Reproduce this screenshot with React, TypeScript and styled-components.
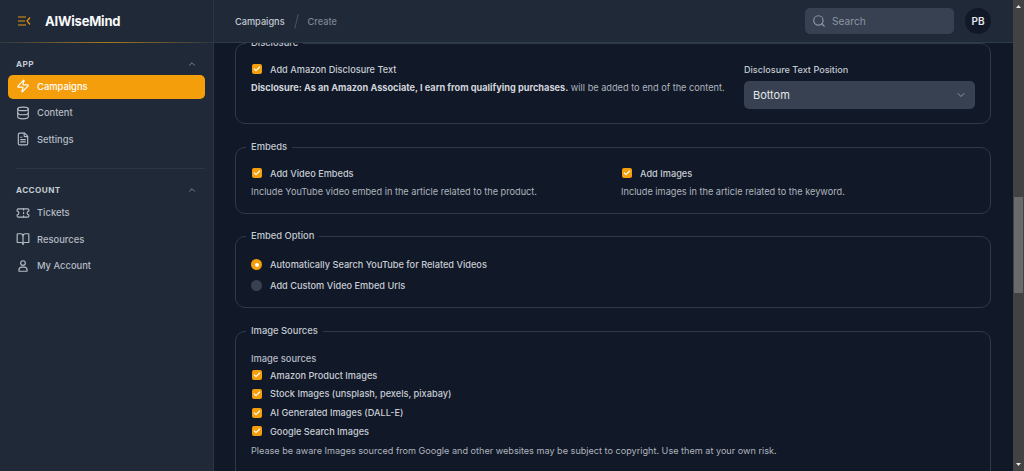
import React from "react";
import styled, { createGlobalStyle } from "styled-components";
import { Zap, Database, FileText, Ticket, BookOpen, ChevronUp, ChevronDown, Search, Check } from "lucide-react";

const Global = createGlobalStyle`
  html, body { margin: 0; padding: 0; height: 471px; overflow: hidden; background: #111827; }
  body { font-family: "Inter", "Liberation Sans", sans-serif; }
  * { box-sizing: border-box; }
`;

const Shell = styled.div`
  display: flex;
  width: 1024px;
  height: 471px;
  overflow: hidden;
`;

const Sidebar = styled.aside`
  width: 214px;
  flex: none;
  background: #1f2937;
  border-right: 1px solid #2b3543;
  display: flex;
  flex-direction: column;
`;

const Brand = styled.div`
  height: 43px;
  display: flex;
  align-items: center;
  gap: 14px;
  padding: 0 0 1px 18px;
  border-bottom: 1px solid transparent;
  border-image: linear-gradient(90deg, #2b3543 0%, #a8791c 50%, #2b3543 100%) 1;
`;

const BrandName = styled.span`
  color: #f9fafb;
  font-size: 13px;
  font-weight: 700;
  letter-spacing: -0.2px;
`;

const NavSection = styled.section<{ $top: number }>`
  padding: ${(p) => p.$top}px 8px 0;
`;

const SectionHead = styled.div`
  display: flex;
  align-items: center;
  justify-content: space-between;
  height: 14px;
  padding: 0 8px;
  margin-bottom: 4.5px;
  color: #c3c9d2;
  font-size: 8.2px;
  font-weight: 700;
  letter-spacing: 0.4px;
`;

const NavItem = styled.div<{ $active?: boolean }>`
  height: 24px;
  display: flex;
  align-items: center;
  gap: 7px;
  padding: 0 8px 2px;
  border-radius: 5px;
  font-size: 9.4px;
  font-weight: 500;
  color: ${(p) => (p.$active ? "#fff" : "#b6bcc6")};
  background: ${(p) => (p.$active ? "#f59e0b" : "transparent")};
`;

const NavList = styled.div`
  display: flex;
  flex-direction: column;
  gap: 2.5px;
`;

const SideDivider = styled.div`
  height: 1px;
  margin: 16px 8px 0 16px;
  background: #2b3543;
`;

const Main = styled.div`
  flex: 1;
  display: flex;
  flex-direction: column;
  min-width: 0;
`;

const TopBar = styled.header`
  height: 43px;
  flex: none;
  background: #1f2937;
  border-bottom: 1px solid #2f3a49;
  display: flex;
  align-items: center;
  padding: 0 22px 0 21px;
`;

const Crumb = styled.span<{ $muted?: boolean }>`
  font-size: 9.2px;
  font-weight: 500;
  color: ${(p) => (p.$muted ? "#7d8695" : "#c2c8d1")};
`;

const CrumbSlash = styled.span`
  width: 1px;
  height: 15px;
  margin: 0 11px;
  background: #4b5563;
  transform: rotate(14deg);
`;

const SearchBox = styled.div`
  width: 149px;
  height: 26px;
  margin-left: auto;
  border-radius: 5px;
  background: #374151;
  display: flex;
  align-items: center;
  gap: 6px;
  padding: 0 7px;
  color: #8d95a3;
  font-size: 10.2px;
`;

const Avatar = styled.div`
  width: 26px;
  height: 26px;
  margin-left: 11px;
  border-radius: 50%;
  background: #111827;
  color: #e5e7eb;
  font-size: 10px;
  font-weight: 600;
  display: flex;
  align-items: center;
  justify-content: center;
`;

const Body = styled.div`
  flex: 1;
  min-height: 0;
  overflow: hidden;
  background: #111827;
`;

const Content = styled.main`
  width: 798px;
  margin: -7px 0 0 0;
  padding: 0 21px;
  display: flex;
  flex-direction: column;
`;

const Group = styled.fieldset<{ $h: number; $gap: number }>`
  margin: 0 0 ${(p) => p.$gap}px;
  padding: 0 15px;
  min-width: 0;
  height: ${(p) => p.$h}px;
  border: 1px solid #2f3a49;
  border-radius: 10px;
`;

const Legend = styled.legend`
  padding: 0 5px;
  margin-left: -5px;
  font-size: 9.4px;
  line-height: 14px;
  font-weight: 500;
  color: #c2c8d1;
`;

const Columns = styled.div`
  display: flex;
  gap: 17px;
  padding-top: 12.5px;
`;

const Col = styled.div<{ $w?: number }>`
  flex: ${(p) => (p.$w ? "none" : "1")};
  width: ${(p) => (p.$w ? `${p.$w}px` : "auto")};
  min-width: 0;
`;

const Line = styled.label<{ $mb?: number }>`
  display: flex;
  align-items: center;
  gap: 8px;
  height: 13px;
  margin-bottom: ${(p) => p.$mb ?? 0}px;
  font-size: 9.2px;
  font-weight: 500;
  color: #c8cdd5;
  white-space: nowrap;
`;

const CheckBox = styled.span`
  width: 10px;
  height: 10px;
  margin-left: 1px;
  flex: none;
  border-radius: 2px;
  background: #f59e0b;
  color: #fff;
  display: flex;
  align-items: center;
  justify-content: center;
`;

const Radio = styled.span<{ $on?: boolean }>`
  width: 11px;
  height: 11px;
  flex: none;
  border-radius: 50%;
  background: ${(p) => (p.$on ? "#f59e0b" : "#374151")};
  display: flex;
  align-items: center;
  justify-content: center;
  &::after {
    content: "";
    display: ${(p) => (p.$on ? "block" : "none")};
    width: 4px;
    height: 4px;
    border-radius: 50%;
    background: #fff;
  }
`;

const Help = styled.p<{ $mt?: number; $size?: number }>`
  margin: ${(p) => p.$mt ?? 0}px 0 0;
  font-size: ${(p) => p.$size ?? 9.2}px;
  line-height: 13px;
  color: #aeb4be;
  white-space: nowrap;
`;

const Strong = styled.b`
  font-weight: 700;
  color: #d1d5db;
`;

const FieldLabel = styled.div`
  font-size: 9.1px;
  line-height: 13px;
  font-weight: 500;
  color: #c2c8d1;
  margin-bottom: 5px;
`;

const SelectBox = styled.div`
  height: 28px;
  border-radius: 5px;
  background: #374151;
  display: flex;
  align-items: center;
  justify-content: space-between;
  padding: 0 8px 0 9px;
  font-size: 11px;
  color: #e5e7eb;
`;

const OptionStack = styled.div`
  display: flex;
  flex-direction: column;
  gap: 8px;
  padding-top: 15px;
`;

const SourceStack = styled.div`
  display: flex;
  flex-direction: column;
  gap: 5.7px;
  padding-top: 14px;
`;

const SourceTitle = styled.div`
  font-size: 9.3px;
  line-height: 13px;
  font-weight: 500;
  color: #b6bcc6;
  margin-bottom: -2px;
`;

const ScrollTrack = styled.div`
  width: 11px;
  flex: none;
  height: 471px;
  background: #424242;
  position: relative;
`;

const ScrollThumb = styled.div`
  position: absolute;
  left: 1px;
  right: 1px;
  top: 197px;
  height: 96px;
  background: #6a6a6a;
`;

const ScrollArrow = styled.svg<{ $bottom?: boolean }>`
  position: absolute;
  left: 3px;
  ${(p) => (p.$bottom ? "bottom: 5px;" : "top: 5px;")}
`;

const CB = () => (
  <CheckBox>
    <Check size={8} strokeWidth={3.5} />
  </CheckBox>
);

const AccountIcon = () => (
  <svg width="14" height="14" viewBox="0 0 24 24" fill="none" stroke="currentColor" strokeWidth="2" strokeLinejoin="round">
    <circle cx="12" cy="7" r="4" />
    <path d="M6 21h12a1 1 0 0 0 1-1v-1a5 5 0 0 0-5-5h-4a5 5 0 0 0-5 5v1a1 1 0 0 0 1 1z" />
  </svg>
);

export default function App() {
  return (
    <>
      <Global />
      <Shell>
        <Sidebar>
          <Brand>
            <svg width="13" height="10" viewBox="0 0 13 10" fill="none" stroke="#e8970f" strokeWidth="1.2">
              <path d="M0 1h8M0 5h7M0 9h8M12 1.5 9 5l3 3.5" />
            </svg>
            <BrandName>AIWiseMind</BrandName>
          </Brand>
          <NavSection $top={13.5}>
            <SectionHead>
              APP
              <ChevronUp size={10} color="#8d95a3" />
            </SectionHead>
            <NavList>
              <NavItem $active>
                <Zap size={14} /> Campaigns
              </NavItem>
              <NavItem>
                <Database size={14} /> Content
              </NavItem>
              <NavItem>
                <FileText size={14} /> Settings
              </NavItem>
            </NavList>
          </NavSection>
          <SideDivider />
          <NavSection $top={14}>
            <SectionHead>
              ACCOUNT
              <ChevronUp size={10} color="#8d95a3" />
            </SectionHead>
            <NavList>
              <NavItem>
                <Ticket size={14} /> Tickets
              </NavItem>
              <NavItem>
                <BookOpen size={14} /> Resources
              </NavItem>
              <NavItem>
                <AccountIcon /> My Account
              </NavItem>
            </NavList>
          </NavSection>
        </Sidebar>
        <Main>
          <TopBar>
            <Crumb>Campaigns</Crumb>
            <CrumbSlash />
            <Crumb $muted>Create</Crumb>
            <SearchBox>
              <Search size={14} /> Search
            </SearchBox>
            <Avatar>PB</Avatar>
          </TopBar>
          <Body>
            <Content>
              <Group $h={88} $gap={16}>
                <Legend>Disclosure</Legend>
                <Columns>
                  <Col>
                    <Line $mb={5}>
                      <CB /> Add Amazon Disclosure Text
                    </Line>
                    <Help>
                      <Strong>Disclosure: As an Amazon Associate, I earn from qualifying purchases.</Strong> will be added to end of the content.
                    </Help>
                  </Col>
                  <Col $w={231}>
                    <FieldLabel>Disclosure Text Position</FieldLabel>
                    <SelectBox>
                      Bottom
                      <ChevronDown size={12} color="#8d95a3" />
                    </SelectBox>
                  </Col>
                </Columns>
              </Group>
              <Group $h={74} $gap={15}>
                <Legend>Embeds</Legend>
                <Columns>
                  <Col>
                    <Line $mb={5}>
                      <CB /> Add Video Embeds
                    </Line>
                    <Help>Include YouTube video embed in the article related to the product.</Help>
                  </Col>
                  <Col $w={354}>
                    <Line $mb={5}>
                      <CB /> Add Images
                    </Line>
                    <Help>Include images in the article related to the keyword.</Help>
                  </Col>
                </Columns>
              </Group>
              <Group $h={79} $gap={16}>
                <Legend>Embed Option</Legend>
                <OptionStack>
                  <Line>
                    <Radio $on /> Automatically Search YouTube for Related Videos
                  </Line>
                  <Line>
                    <Radio /> Add Custom Video Embed Urls
                  </Line>
                </OptionStack>
              </Group>
              <Group $h={160} $gap={16}>
                <Legend>Image Sources</Legend>
                <SourceStack>
                  <SourceTitle>Image sources</SourceTitle>
                  <Line>
                    <CB /> Amazon Product Images
                  </Line>
                  <Line>
                    <CB /> Stock Images (unsplash, pexels, pixabay)
                  </Line>
                  <Line>
                    <CB /> AI Generated Images (DALL-E)
                  </Line>
                  <Line>
                    <CB /> Google Search Images
                  </Line>
                  <Help $mt={1} $size={9.12}>Please be aware Images sourced from Google and other websites may be subject to copyright. Use them at your own risk.</Help>
                </SourceStack>
              </Group>
            </Content>
          </Body>
        </Main>
        <ScrollTrack>
          <ScrollArrow width="5" height="3" viewBox="0 0 5 3" fill="#e8e8e8">
            <path d="M2.5 0 5 3H0z" />
          </ScrollArrow>
          <ScrollThumb />
          <ScrollArrow $bottom width="5" height="3" viewBox="0 0 5 3" fill="#e8e8e8">
            <path d="M0 0h5L2.5 3z" />
          </ScrollArrow>
        </ScrollTrack>
      </Shell>
    </>
  );
}
